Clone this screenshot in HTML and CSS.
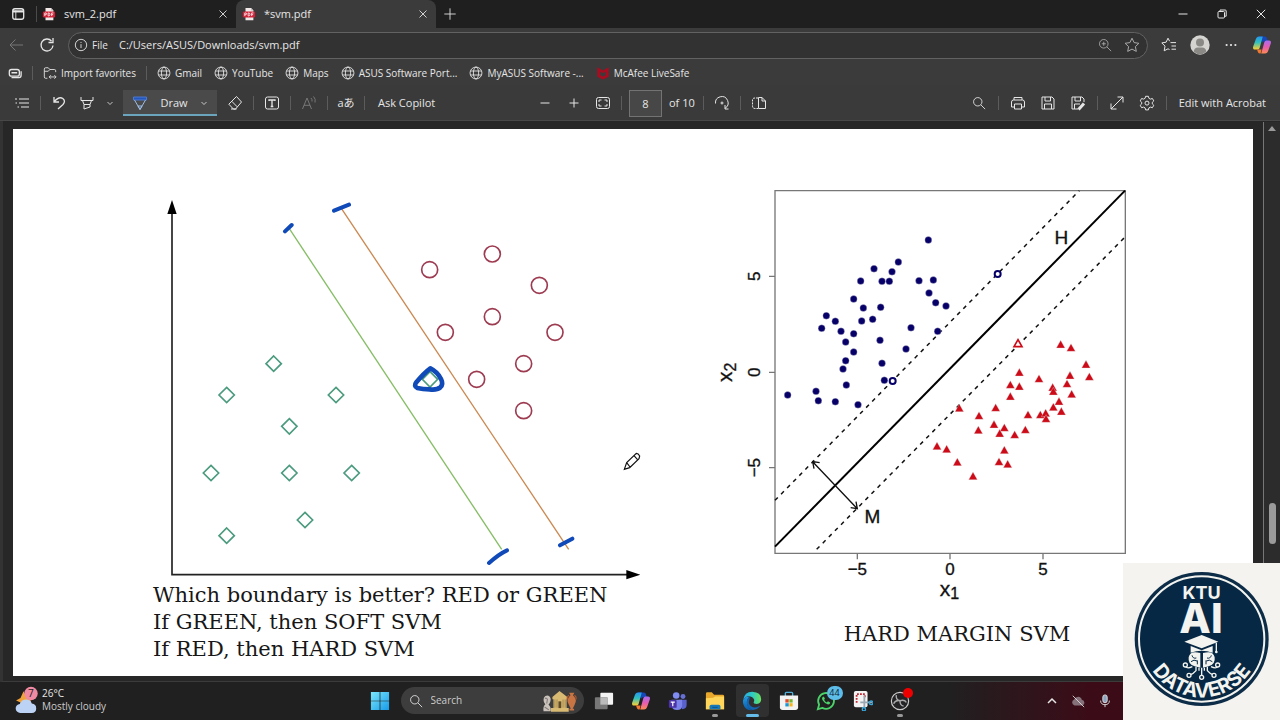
FILE: index.html
```html
<!DOCTYPE html>
<html lang="en">
<head>
<meta charset="utf-8">
<meta name="viewport" content="width=device-width, initial-scale=1">
<title>svm.pdf</title>
<link rel="stylesheet" href="styles.css">
</head>
<body>
<svg class="defs" aria-hidden="true">
  <defs>
    <symbol id="globe" viewBox="0 0 16 16"><circle cx="8" cy="8" r="6.8"/><ellipse cx="8" cy="8" rx="3" ry="6.8"/><path d="M1.6 5.7h12.8M1.6 10.3h12.8"/></symbol>
    <symbol id="close" viewBox="0 0 16 16"><path d="M4 4l8 8M12 4l-8 8"/></symbol>
    <symbol id="chev" viewBox="0 0 16 16"><path d="M3 6l5 5 5-5" stroke-width="1.600"/></symbol>
    <symbol id="lens" viewBox="0 0 16 16"><circle cx="6.6" cy="6.6" r="4.8"/><path d="M10.2 10.2L15 15"/></symbol>
    <symbol id="pdf" viewBox="0 0 16 16"><path d="M4 1.2h6.4L13 4v11H4z" fill="#f3e9e9" stroke="none"/><path d="M10.4 1.2V4H13z" fill="#bbb" stroke="none"/><rect x="1" y="5" width="14" height="7" rx="1.5" fill="#cf2338" stroke="none"/><path d="M3.2 10.4V6.8h1q1 0 1 1t-1 1h-1M7 6.8v3.4h.6q1.500 0 1.500-1.700T7.600 6.800zM11 10.400V6.800h2.200M11 8.700h1.700" stroke="#fff" stroke-width=".9"/></symbol>
    <linearGradient id="cpa" x1="0" y1="0" x2="0" y2="1"><stop offset="0" stop-color="#2696ee"/><stop offset=".45" stop-color="#31c1bd"/><stop offset="1" stop-color="#ffd02f"/></linearGradient>
    <linearGradient id="cpb" x1="0" y1="0" x2="0" y2="1"><stop offset="0" stop-color="#a66df0"/><stop offset=".5" stop-color="#e65cb0"/><stop offset="1" stop-color="#ff8a51"/></linearGradient>
    <symbol id="copilot" viewBox="0 0 20 20"><g stroke="none"><path d="M7 1.500h6q1.400 0 1.900 1.600l.9 3.200h-3.600q-1.600 0-2 1.500z" fill="#1746b8"/><path d="M7 1.500Q4.600 1.500 3.700 4.500L1.200 11.500Q.4 14.600 3 14.600h2.600q1.500 0 2-1.700L10.800 1.500z" fill="url(#cpa)"/><path d="M13 18.500q2.400 0 3.300-3l2.500-7q.8-3.100-1.800-3.100h-2.600q-1.500 0-2 1.700L9.200 18.500z" fill="url(#cpb)"/><path d="M5 14.600h4.600l-1 3.900H7.600q-1.300 0-1.800-1.700z" fill="#f4782f"/></g></symbol>
    <linearGradient id="win" x1="0" y1="0" x2="1" y2="1"><stop offset="0" stop-color="#7be7fb"/><stop offset="1" stop-color="#169bea"/></linearGradient>
    <linearGradient id="edgeA" x1="0" y1="0" x2="1" y2="0"><stop offset="0" stop-color="#28a8e8"/><stop offset=".5" stop-color="#2dc9c5"/><stop offset="1" stop-color="#6de25b"/></linearGradient>
    <linearGradient id="edgeB" x1="0" y1="0" x2="0" y2="1"><stop offset="0" stop-color="#209ce4"/><stop offset="1" stop-color="#0c59a4"/></linearGradient>
    <marker id="diamond" markerUnits="userSpaceOnUse" markerWidth="60" markerHeight="60" refX="30" refY="30" viewBox="0 0 60 60"><path d="M30 7l23 23-23 23L7 30z" fill="none" stroke="#4b9b7e" stroke-width="5"/></marker>
    <marker id="ring" markerUnits="userSpaceOnUse" markerWidth="60" markerHeight="60" refX="30" refY="30" viewBox="0 0 60 60"><circle cx="30" cy="30" r="24" fill="none" stroke="#9d3b51" stroke-width="5"/></marker>
    <marker id="dot" markerUnits="userSpaceOnUse" markerWidth="24" markerHeight="24" refX="12" refY="12" viewBox="0 0 24 24"><circle cx="12" cy="12" r="10.500" fill="#060068"/></marker>
    <marker id="tri" markerUnits="userSpaceOnUse" markerWidth="30" markerHeight="30" refX="15" refY="15" viewBox="0 0 30 30"><path d="M15 2l13 23H2z" fill="#cd0a17"/></marker>
  </defs>
</svg>

<header class="browser">
  <div class="tabs">
    <button class="tab-menu" aria-label="Tab actions"><svg class="i14" viewBox="0 0 16 16"><rect x="2" y="2" width="12.500" height="12" rx="2.500" stroke-width="1.500"/><path d="M2 5h12.500" stroke-width="2.500"/><path d="M5.500 4v10"/></svg></button>
    <div class="tab"><svg class="i14"><use href="#pdf"/></svg><span>svm_2.pdf</span><button aria-label="Close svm_2.pdf"><svg class="i14"><use href="#close"/></svg></button></div>
    <div class="tab active"><svg class="i14"><use href="#pdf"/></svg><span>*svm.pdf</span><button aria-label="Close svm.pdf"><svg class="i14"><use href="#close"/></svg></button></div>
    <button class="new-tab" aria-label="New tab"><svg class="i14" viewBox="0 0 16 16"><path d="M8 1.500v13M1.500 8h13"/></svg></button>
    <div class="window-controls">
      <button aria-label="Minimize"><svg class="i12" viewBox="0 0 12 12"><path d="M1.500 6h9"/></svg></button>
      <button aria-label="Restore"><svg class="i12" viewBox="0 0 12 12"><rect x="2" y="3.500" width="6.500" height="6.500" rx="1"/><path d="M4 3.300V2h5.200q1 0 1 1v5.200H9"/></svg></button>
      <button aria-label="Close window"><svg class="i12" viewBox="0 0 12 12"><path d="M1.800 1.800l8.400 8.400M10.200 1.800l-8.400 8.400"/></svg></button>
    </div>
  </div>

  <div class="address-row">
    <button class="dim" aria-label="Back"><svg class="i16" viewBox="0 0 16 16"><path d="M15 8H2M7.500 2.500L2 8l5.500 5.500"/></svg></button>
    <button aria-label="Refresh"><svg class="i16" viewBox="0 0 16 16"><path d="M14 8.500A6 6 0 1 1 12.500 4M14 1v4.500H9.500" stroke-width="1.300"/></svg></button>
    <form class="omnibox">
      <svg class="i14" viewBox="0 0 16 16"><circle cx="8" cy="8" r="6.500"/><path d="M8 7v4.500M8 4.500v1.200"/></svg>
      <label for="url">File</label>
      <input id="url" type="text" value="C:/Users/ASUS/Downloads/svm.pdf">
      <button type="button" class="soft" aria-label="Zoom"><svg class="i14" viewBox="0 0 16 16"><circle cx="6.600" cy="6.600" r="4.900"/><path d="M10.200 10.200L15 15M4.300 6.600h4.600M6.600 4.300v4.600"/></svg></button>
      <button type="button" class="soft" aria-label="Add to favorites"><svg class="i16" viewBox="0 0 16 16"><path d="M8 1.200l2.100 4.400 4.800.7-3.500 3.300.9 4.800L8 12.100l-4.300 2.300.9-4.800L1.100 6.300l4.800-.7z"/></svg></button>
    </form>
    <button aria-label="Favorites"><svg class="i16" viewBox="0 0 16 16"><path d="M9.500 5.600H15M10.500 9H15M10.500 12.200H15M8.600 4.200L7 1.200 5.100 5.200.8 5.900l3.200 3.200-.8 4.700L7 11.800l1.500.7"/></svg></button>
    <button aria-label="Profile"><svg class="i20" viewBox="0 0 20 20"><circle cx="10" cy="10" r="9.700" fill="#d5d4d1" stroke="none"/><circle cx="10" cy="7.600" r="4" fill="#8a8986" stroke="none"/><path d="M3.600 16.500q1-4 4-4h4.800q3 0 4 4-2.600 2.700-6.400 2.700t-6.400-2.700z" fill="#8a8986" stroke="none"/></svg></button>
    <button aria-label="Settings and more"><svg class="i14" viewBox="0 0 16 16"><path d="M3 8h.01M8 8h.01M13 8h.01" stroke-width="2.500" stroke-linecap="round"/></svg></button>
    <button aria-label="Copilot"><svg class="i20"><use href="#copilot"/></svg></button>
  </div>

  <nav class="favorites" aria-label="Favorites bar">
    <button aria-label="Saved groups"><svg class="i14" viewBox="0 0 16 16"><rect x="1.500" y="4" width="11.500" height="7.500" rx="2.500" stroke-width="1.500"/><path d="M4 7.700h6.500M4 13.300h8.500q2.500 0 2.500-3V6" stroke-width="1.500"/></svg></button>
    <i class="sep"></i>
    <a href="#"><svg class="i14" viewBox="0 0 16 16"><path d="M5 14H3q-1.500 0-1.500-1.500v-9Q1.500 2 3 2h3l1.800 2H13q1.500 0 1.500 1.500V7M1.500 6H6l1.800-2M7.500 12.500h7M9 10.500l-2 2 2 2M13 10.500l2 2-2 2"/></svg>Import favorites</a>
    <i class="sep"></i>
    <a href="#"><svg class="i14"><use href="#globe"/></svg>Gmail</a>
    <a href="#"><svg class="i14"><use href="#globe"/></svg>YouTube</a>
    <a href="#"><svg class="i14"><use href="#globe"/></svg>Maps</a>
    <a href="#"><svg class="i14"><use href="#globe"/></svg>ASUS Software Port...</a>
    <a href="#"><svg class="i14"><use href="#globe"/></svg>MyASUS Software -...</a>
    <a href="#"><svg class="i14 flat" viewBox="0 0 16 16"><path d="M1.500 1.500L8 5l6.500-3.500v10.700L8 15.500l-6.500-3.300zM5 6.500v4l3 1.500 3-1.500v-4L8 8z" fill="#a70d20" fill-rule="evenodd"/></svg>McAfee LiveSafe</a>
  </nav>
</header>

<div class="pdf-bar" role="toolbar" aria-label="PDF tools">
  <div class="group tools">
    <button aria-label="Contents"><svg class="i16" viewBox="0 0 16 16"><path d="M5 4h10M5 8h10M7 12h8M1 4h2M1.500 8h1.500M3.500 12H5"/></svg></button>
    <i class="sep"></i>
    <button aria-label="Undo"><svg class="i16" viewBox="0 0 16 16"><path d="M3 2v5h5M3.300 6.700Q8 1 11.800 3.500 15 6.200 12 9.500L7 14" stroke-width="1.300"/></svg></button>
    <button aria-label="Highlight"><svg class="i16" viewBox="0 0 16 16"><path d="M2 2v3.500h12V2M3.500 5.500L5 9.500h6l1.500-4M5 9.500V14l6-2V9.500"/></svg></button>
    <button class="mini" aria-label="Highlight options"><svg class="i8"><use href="#chev"/></svg></button>
    <button class="draw"><svg class="i16" viewBox="0 0 16 16"><path d="M1.500 2h13v3h-13z" fill="#2457bd" stroke="#4c78cf"/><path d="M2.500 5L8 14.500 13.500 5M6 11h4L8 14.500z" stroke="#9ebde5"/></svg>Draw<svg class="i8"><use href="#chev"/></svg></button>
    <button aria-label="Erase"><svg class="i16" viewBox="0 0 16 16"><path d="M9.500 1.500L1.800 9.200l4.700 4.900h2L14.500 7zM4.800 6.300l5.400 5.500M4 14h5.500"/></svg></button>
    <i class="sep"></i>
    <button aria-label="Add text"><svg class="i16" viewBox="0 0 16 16"><rect x="1.500" y="2" width="13" height="12" rx="2"/><path d="M5 6V5h6v1M8 5v6.500M6.700 11.500h2.600" stroke-width="1.300"/></svg></button>
    <i class="sep"></i>
    <button class="dim" aria-label="Read aloud"><svg class="i16" viewBox="0 0 16 16"><path d="M1.500 14L6 3l4.500 11M3 10.300h6M10 3q1.500 1.500 1 3.500M12.500 1.500q2.500 2.500 1.500 6"/></svg></button>
    <i class="sep"></i>
    <button class="translate" aria-label="Translate">aあ</button>
    <i class="sep"></i>
    <button class="text">Ask Copilot</button>
  </div>
  <div class="group pages">
    <button aria-label="Zoom out"><svg class="i12" viewBox="0 0 12 12"><path d="M1.500 6h9"/></svg></button>
    <button aria-label="Zoom in"><svg class="i12" viewBox="0 0 12 12"><path d="M1.500 6h9M6 1.500v9"/></svg></button>
    <button aria-label="Fit page"><svg class="i16" viewBox="0 0 16 16"><rect x="1.500" y="2.500" width="13" height="11" rx="2"/><path d="M4 7V5h2.500M12 7V5H9.500M4 9v2h2.500M12 9v2H9.500"/></svg></button>
    <i class="sep"></i>
    <input class="page-no" type="text" value="8" aria-label="Page number">
    <span class="page-total">of 10</span>
    <i class="sep"></i>
    <button aria-label="Rotate"><svg class="i16" viewBox="0 0 16 16"><path d="M1.500 8.500A6.300 6.300 0 1 1 11 13.300M11 10v4h3.500"/><circle cx="8" cy="8" r="1"/></svg></button>
    <i class="sep"></i>
    <button aria-label="Page view"><svg class="i16" viewBox="0 0 16 16"><path d="M7 3H4Q1.500 3 1.500 5v6q0 2.500 2.500 2.500h3" stroke-dasharray="2 1"/><path d="M7.500 2.500H11L14.500 6v7.500h-7zM11 2.500V6h3.500"/></svg></button>
  </div>
  <div class="group actions">
    <button aria-label="Find"><svg class="i14"><use href="#lens"/></svg></button>
    <i class="sep"></i>
    <button aria-label="Print"><svg class="i16" viewBox="0 0 16 16"><path d="M4 5V2.500h8V5M4 12H1.500V7q0-2 2-2h9q2 0 2 2v5H12M4.500 9h7v5h-7z"/></svg></button>
    <button aria-label="Save"><svg class="i16" viewBox="0 0 16 16"><path d="M2 2h10l2 2v10H2zM5 2v4h5.500V2M4.500 14V9h7v5"/></svg></button>
    <button aria-label="Save as"><svg class="i16" viewBox="0 0 16 16"><path d="M8 14H2V2h10l2 2v3M5 2v4h5.500V2M4.500 14V9H10"/><path d="M8.500 14.500L14 8.500" stroke-width="3"/></svg></button>
    <i class="sep"></i>
    <button aria-label="Full screen"><svg class="i16" viewBox="0 0 16 16"><path d="M2 14L14 2M8.500 2H14v5.500M2 8.500V14h5.500"/></svg></button>
    <button aria-label="Settings"><svg class="i16" viewBox="0 0 16 16"><path d="M6.600 1.300h2.800l.5 2 1.500.8 2-.6 1.400 2.400-1.500 1.400v1.600l1.500 1.400-1.400 2.400-2-.6-1.500.8-.5 2H6.600l-.5-2-1.500-.8-2 .6L1.200 10.300l1.500-1.400V7.300L1.200 5.900l1.400-2.400 2 .6 1.500-.8z"/><circle cx="8" cy="8.100" r="2"/></svg></button>
    <i class="sep"></i>
    <button class="text">Edit with Acrobat</button>
  </div>
</div>

<main class="viewer">
  <article class="slide">
    <section class="column">
      <svg class="boundary" viewBox="0 0 1560 1206" role="img" aria-label="Two classes with a green and a red boundary">
        <path d="M96 95V1184H1465" fill="none" stroke="#222" stroke-width="5"/>
        <path d="M96 60l14 42H82zM1501 1184l-42 14v-28z" fill="#000"/>
        <path d="M448 146L1085 1108" stroke="#86bd65" stroke-width="4"/>
        <path d="M604 85L1286 1108" stroke="#cb8850" stroke-width="4"/>
        <polyline class="points diamonds" points="401,551 260,645 588,645 448,739 213,879 448,879 635,879 495,1020 260,1067 870,598"/>
        <polyline class="points rings" points="869,269 1057,222 1198,316 1057,410 916,457 1245,457 1151,551 1010,598 1151,692"/>
        <g fill="none" stroke="#1049b8" stroke-width="12" stroke-linecap="round" stroke-linejoin="round">
          <path d="M582 92l45-18M435 154l20-19M1047 1149q30-27 54-38M1260 1096l37-20"/>
          <path d="M871 565Q852 579 829 607 820 618 832 624 848 628 869 628 890 631 901 622 911 613 903 597 893 576 871 565z" stroke-width="14"/>
        </g>
        <path d="M1453 868l7-20 29-28q6 0 10 8l-2 8-28 27zM1460 848l10 13M1482 827l10 11" fill="#fff" stroke="#111" stroke-width="3.500"/>
      </svg>
      <div class="caption">
        <p>Which boundary is better? RED or GREEN</p>
        <p>If GREEN, then SOFT SVM</p>
        <p>If RED, then HARD SVM</p>
      </div>
    </section>
    <section class="column">
      <svg class="margin-plot" viewBox="0 0 1290 1278" role="img" aria-label="Hard margin separating hyperplane">
        <path d="M195 32H1246V1120H195zM442 1120v18M720 1120v18M999 1120v18M195 289h-18M195 577h-18M195 863h-18" fill="none" stroke="#777" stroke-width="4"/>
        <path d="M195 1100L1245 32" stroke="#000" stroke-width="6"/>
        <path d="M195 961L1108 32M320 1108L1246 170" stroke="#111" stroke-width="4.500" stroke-dasharray="12 14"/>
        <path d="M308 845L442 986M329 848l-21-3 4 21M422 983l20 3-4-21" fill="none" stroke="#111" stroke-width="4"/>
        <polyline class="points dots" points="655,180 565,246 546,275 492,266 452,303 516,304 538,304 627,302 670,300 657,339 677,368 708,378 431,357 460,384 512,382 349,407 376,424 335,445 393,454 455,423 488,418 431,461 407,486 510,481 603,443 683,454 588,507 431,516 407,542 399,567 516,550 523,601 409,615 233,645 318,634 325,662 376,665 444,674"/>
        <polyline class="points tris" points="1052,494 1083,504 1128,554 1138,591 1080,587 1071,612 1085,643 987,597 928,578 901,615 928,620 901,650 1028,623 1030,635 1047,665 1030,682 1054,695 748,685 857,684 807,708 954,705 991,705 1007,700 1008,717 852,734 883,744 805,751 869,761 914,765 946,750 681,799 710,808 883,811 742,847 867,846 893,853 789,889"/>
        <g fill="#fff" stroke="#060068" stroke-width="6"><circle cx="548" cy="603" r="9"/><circle cx="863" cy="282" r="9"/></g>
        <path d="M924 479l12 21h-24z" fill="#fff" stroke="#cd0a17" stroke-width="5"/>
        <g class="axis-text">
          <text x="442" y="1184">−5</text><text x="720" y="1184">0</text><text x="999" y="1184">5</text>
          <text transform="translate(151 289) rotate(-90)">5</text><text transform="translate(151 577) rotate(-90)">0</text><text transform="translate(151 863) rotate(-90)">−5</text>
        </g>
        <g class="line-text"><text x="1054" y="193">H</text><text x="487" y="1029">M</text></g>
        <text class="var" x="718" y="1247">x<tspan class="sub" dy="10">1</tspan></text>
        <text class="var" transform="translate(66 577) rotate(-90)">x<tspan class="sub" dy="12">2</tspan></text>
      </svg>
      <p class="caption heading">HARD MARGIN SVM</p>
    </section>
  </article>
  <div class="scroll" aria-hidden="true"><span class="up"></span><span class="thumb"></span></div>
</main>

<footer class="taskbar">
  <div class="weather">
    <svg class="w-icon" viewBox="0 0 60 75"><path d="M22 14l4 8 10-6 8 36H12l2-8-12-5 12-7z" fill="#f2a23b"/><path d="M14 72a12 12 0 0 1-2-24q5-12 17-12 12 0 15 11 12 1 12 13 0 12-12 12z" fill="#bcd3f5"/><circle cx="42" cy="20" r="18" fill="#f08aa2"/><text x="42" y="29">7</text></svg>
    <div><strong>26°C</strong><span>Mostly cloudy</span></div>
  </div>
  <div class="apps">
    <button aria-label="Start"><svg class="i20 flat" viewBox="0 0 22 22"><path d="M1 1h9.600v9.600H1zM11.400 1H21v9.600h-9.600zM1 11.400h9.600V21H1zM11.400 11.400H21V21h-9.600z" fill="url(#win)"/></svg></button>
    <label class="search"><svg class="i14"><use href="#lens"/></svg><input type="text" placeholder="Search" aria-label="Search">
      <svg class="temple flat" viewBox="0 0 100 62"><path d="M5 60q-2-14 5-20-7-7-4-18 4-8 13-6 9 5 5 17-2 6-5 8 8 8 6 19z" fill="#c9c2bb"/><path d="M9 24q4-3 7 2l-2 12M8 48l12 8" fill="none" stroke="#807b7a" stroke-width="3"/><path d="M30 20L50 3l22 17v6H30zM33 26h37v25H33zM26 51h50v10H26z" fill="#d8ba72"/><path d="M37 27v23M43 27v23M60 27v23M66 27v23" stroke="#a98d51" stroke-width="3"/><path d="M47 32h8v19h-8z" fill="#5d4b2a"/><path d="M77 8h15l-4 7q14 12 4 28l-5 10h4v5H78v-5h4l-5-10q-11-16 4-28z" fill="#c87443"/><path d="M77 15q-7 4-5 12M92 15q7 4 4 12" fill="none" stroke="#b2562e" stroke-width="3"/></svg></label>
    <button aria-label="Task view"><svg class="i20 flat" viewBox="0 0 22 22"><rect x="7" y="2" width="14" height="13" rx="1" fill="#f3f3f3"/><rect x="1" y="7" width="14" height="13" rx="1" fill="#777"/><path d="M7 7h8v8H7z" fill="#bbb"/></svg></button>
    <button aria-label="Copilot"><svg class="i20"><use href="#copilot"/></svg></button>
    <button aria-label="Teams"><svg class="i20 flat" viewBox="0 0 22 22"><circle cx="9" cy="5" r="3.600" fill="#818cf2"/><circle cx="16.500" cy="6" r="2.700" fill="#6770d6"/><path d="M12 9.500h8.500v6q0 4.500-5 4.500z" fill="#5962cc"/><path d="M4 9.500h11.500v6.500q0 5-5.500 5t-6-5z" fill="#7b83eb"/><rect x="1" y="10" width="8.500" height="8.500" rx="1" fill="#4b32a8"/><path d="M3 12.300h4.500M5.250 12.300v4.500" stroke="#fff" stroke-width="1.300"/></svg></button>
    <button class="open" aria-label="File Explorer"><svg class="i20 flat" viewBox="0 0 22 22"><path d="M1 3q0-1.500 1.500-1.500h5L10 4h9.500Q21 4 21 5.500V20H1z" fill="#e9a82b"/><path d="M1 8l8-.5L11 6h10v14H1z" fill="#ffd65a"/><path d="M5 20v-3q0-2 2-2h8q2 0 2 2v3z" fill="#1879b9"/><path d="M8 18h6" stroke="#07528c"/></svg></button>
    <button class="open current" aria-label="Edge"><svg class="i20 flat" viewBox="0 0 24 24"><path d="M1.200 11Q3 1 12.300 1 23 1.500 23 10q0 5-5.300 5.500-4 0-3.700-2 1.200-1.200.4-3.500Q12.500 6.300 8 6.200 3.500 6.500 1.200 11z" fill="url(#edgeA)"/><path d="M1.200 11Q4 6 8.600 7q-3 2.500-2.700 7 .6 6.500 7 8.900Q4 24 1.500 15.500q-.6-2.500-.3-4.500z" fill="url(#edgeB)"/><path d="M8.600 11q-1.300 4.500 2.200 7.200 4.500 3 9.600 0 1.400-.4.500 1-3.300 3.700-8 3.700-5.500-1.700-7-7.200Q5 9 10 7.200q-1 1.500-1.400 3.800z" fill="#1266b4"/></svg></button>
    <button aria-label="Microsoft Store"><svg class="i20 flat" viewBox="0 0 22 22"><path d="M7 6V2.500Q7 1.500 8 1.500h6q1 0 1 1V6" stroke="#4faed9" stroke-width="1.500"/><path d="M1 5h20v13q0 3-3 3H4q-3 0-3-3z" fill="#f3f3f3"/><path d="M7 9h3.700v3.700H7z" fill="#e24a2b"/><path d="M11.400 9H15v3.700h-3.600z" fill="#72b72c"/><path d="M7 13.400h3.700V17H7z" fill="#1a94da"/><path d="M11.400 13.400H15V17h-3.600z" fill="#f6b51c"/></svg></button>
    <button aria-label="WhatsApp"><svg class="i20" viewBox="0 0 22 22"><path d="M2 20l1.400-5A8.700 8.700 0 1 1 7 18.600z" stroke="#4bd36a" stroke-width="2"/><path d="M7.700 6.300q-2 1.500-.2 4.200 2.300 3.800 5.800 4.400 2.200-.1 2.300-2.300l-2.500-1.200-1.200 1.300q-2-.8-3-3l.9-1.100-1.100-2.300z" fill="#4bd36a" stroke="none"/></svg><span class="badge">44</span></button>
    <button aria-label="Snipping Tool"><svg class="i20" viewBox="0 0 22 22"><rect x="1" y="0" width="15" height="18" rx="2" fill="#f3f3f3" stroke="none"/><path d="M4 13V3.500h9V8" stroke="#c22932" stroke-width="2" stroke-dasharray="2 1.300"/><path d="M12.500 5v14M8 12.500h13" stroke="#9aa8b3" stroke-width="2"/><circle cx="20" cy="13" r="2" stroke="#38a7dc" stroke-width="1.500"/><circle cx="12" cy="20" r="1.800" stroke="#38a7dc" stroke-width="1.500"/></svg></button>
    <button class="open" aria-label="OBS Studio"><svg class="i20" viewBox="0 0 22 22"><circle cx="11" cy="11" r="9.500" fill="#242427" stroke="#ccc" stroke-width="1.300"/><path d="M7 4.500q-1 5 4 6.200 5-1.500 7 1.800M11 10.700q-.2 5 4 6M11 10.700Q6 9.500 4 14" stroke="#aaa" stroke-width="1.500"/></svg><span class="recording"></span></button>
  </div>
  <div class="tray">
    <button aria-label="Show hidden icons"><svg class="i12" viewBox="0 0 12 12"><path d="M2 8l4-4 4 4" stroke-width="1.500"/></svg></button>
    <button aria-label="Cloud sync"><svg class="i14" viewBox="0 0 16 16"><path d="M4 13a3.500 3.500 0 0 1-.4-6.700Q5 3 8.300 3q3.400.3 4 3.500 3 .6 3 3.500-.3 3-3.300 3z" fill="#85717a" stroke="none"/><path d="M2 2l13 13" stroke="#ddd"/></svg></button>
    <button aria-label="Microphone"><svg class="i14" viewBox="0 0 16 16"><rect x="5.500" y="1" width="5" height="9" rx="2.500" fill="#8ba4c0"/><path d="M3 7.500q0 4.700 5 4.700t5-4.700M8 12.200V15"/></svg></button>
  </div>
</footer>

<aside class="brand">
  <svg viewBox="39 189 471 471" role="img" aria-label="KTU AI Dataverse">
    <circle cx="275" cy="417" r="201" fill="#0c2c47"/>
    <circle cx="275" cy="417" r="188" fill="#062844" stroke="#f3f3ef" stroke-width="6"/>
    <text class="ktu" x="275" y="296">KTU</text>
    <text class="ai" x="273" y="398">AI</text>
    <path id="arc" d="M98 415A177 177 0 0 0 452 415" fill="none"/>
    <text class="ring-text"><textPath href="#arc" startOffset="50%">DATAVERSE</textPath></text>
    <path d="M223 425l52-20 50 20-50 20zM242 438l33 13 33-13v20q-33-11-66 0z" fill="#f3f3ef"/>
    <path d="M319 428v29" stroke="#f3f3ef" stroke-width="4"/><circle cx="319" cy="456" r="4" fill="#f3f3ef"/>
    <path d="M271 459q-31-9-35 13-3 21 18 27l17 4zM279 459q31-9 35 13 3 21-18 27l-17 4z" fill="#f3f3ef"/>
    <path d="M246 466q3 11 13 8M243 485q9-8 18-2M262 493v-12M304 466q-3 11-13 8M307 485q-9-8-18-2M288 493v-12" fill="none" stroke="#062844" stroke-width="3"/>
    <g fill="#062844" stroke="#f3f3ef" stroke-width="4"><path d="M258 500v12q-7 9-19 13M247 500q-15 7-20 0M292 500v12q7 9 19 13M303 500q15 7 20 0M275 503v24M267 503v9M283 503v9" fill="none"/><circle cx="226" cy="495" r="6"/><circle cx="323" cy="495" r="6"/><circle cx="237" cy="526" r="6"/><circle cx="312" cy="526" r="6"/><circle cx="275" cy="532" r="6"/></g>
  </svg>
</aside>
</body>
</html>
```
FILE: styles.css
```css
* { box-sizing: border-box; }

body {
  margin: 0;
  min-height: 100vh;
  display: flex;
  flex-direction: column;
  background: #272727;
  color: #e6e6e6;
  font: 11px/16px "Open Sans", "Noto Sans", sans-serif;
  overflow-x: hidden;
}

button, input {
  font: inherit;
  color: inherit;
  background: none;
  border: 0;
  padding: 0;
  margin: 0;
}

button {
  display: inline-flex;
  align-items: center;
  justify-content: center;
  flex-shrink: 0;
}

input { min-width: 0; outline: 0; }
a { color: inherit; text-decoration: none; }
p { margin: 0; }
svg { display: block; flex-shrink: 0; fill: none; stroke: currentColor; }
.flat { stroke: none; }
.defs { position: absolute; width: 0; height: 0; }
svg text { stroke: none; }

.i8 { width: 8px; height: 8px; }
.i12 { width: 12px; height: 12px; }
.i14 { width: 14px; height: 14px; }
.i16 { width: 16px; height: 16px; }
.i20 { width: 20px; height: 20px; }
.dim { color: #777; }
.soft { color: #aaa; }
.sep { width: 1px; height: 14px; background: #5c5c5c; flex-shrink: 0; }

/* Browser chrome */
.browser { background: #3b3b3b; }

.tabs { display: flex; height: 28px; padding-bottom: 1px; background: #1f1f1f; }
.tab-menu { width: 36px; }
.tab {
  display: flex;
  align-items: center;
  gap: 8px;
  width: 200px;
  padding: 0 6px;
}
.tab:not(.active) { background: linear-gradient(#4b4b4b, #4b4b4b) no-repeat 0 50% / 1px 16px; }
.tab span { flex: 1; }
.tab.active { height: 28px; background: #3b3b3b; border-radius: 8px 8px 0 0; }
.new-tab { width: 28px; }
.window-controls { display: flex; margin-left: auto; }
.window-controls button { width: 39px; }

.address-row {
  display: flex;
  align-items: center;
  gap: 11px;
  height: 34px;
  padding: 0 8px 0 6px;
}
.address-row > button { width: 20px; height: 20px; }
.omnibox {
  flex: 1;
  display: flex;
  align-items: center;
  gap: 4px;
  height: 27px;
  padding: 0 7px 0 5px;
  background: #323232;
  border: 1px solid #626262;
  border-radius: 14px;
}
.omnibox label { width: 23px; font-size: 10px; }
.omnibox input { flex: 1; }
.omnibox .soft { margin-left: 8px; }

.favorites {
  display: flex;
  align-items: center;
  gap: 12px;
  height: 23px;
  padding: 0 0 1px 8px;
  font-size: 10px;
}
.favorites a { display: flex; align-items: center; gap: 4px; white-space: nowrap; }
.favorites .sep { margin: 0 -2px; }

/* PDF toolbar */
.pdf-bar {
  display: flex;
  align-items: center;
  height: 36px;
  padding: 1px 14px 0 12px;
  background: #3a3a3a;
  border-bottom: 1px solid #484848;
  white-space: nowrap;
}
.group { display: flex; align-items: center; gap: 8px; }
.group button { min-width: 20px; height: 26px; }
.group .mini { min-width: 10px; }
.group .draw {
  width: 94px;
  gap: 12px;
  padding-top: 2px;
  background: #4a4a4a;
  border-bottom: 2px solid #6ba5bd;
}
.translate { font-family: "Open Sans", "Noto Sans CJK JP", sans-serif; }
.tools .text { width: 69px; padding-left: 5px; justify-content: flex-start; }
.pages { gap: 7px; margin-left: 92px; }
.pages button { min-width: 22px; }
.page-no {
  width: 33px;
  height: 27px;
  text-align: center;
  background: #474747;
  border: 1px solid #737373;
}
.page-total { width: 27px; }
.actions { margin-left: auto; }
.actions button { min-width: 22px; }
.actions .text { padding-left: 4px; }

/* Document */
.viewer {
  flex: 1;
  display: flex;
  padding: 8px 0 5px 10px;
  border-left: 3px solid #333;
  background: #272727;
  border-bottom: 1px solid #3b3b3b;
}
.slide {
  flex: 1;
  display: flex;
  justify-content: center;
  gap: 50px;
  padding: 51px 0 13px 14px;
  background: #fff;
  color: #171717;
}
.boundary { width: 520px; stroke: none; }
.margin-plot { width: 430px; stroke: none; }
.caption { padding-left: 13px; font: 21px/27px "DejaVu Serif", serif; white-space: nowrap; }
.heading { margin-top: 15px; padding-left: 64px; text-align: center; }
.points { fill: none; stroke: none; }
.diamonds { marker: url(#diamond); }
.rings { marker: url(#ring); }
.dots { marker: url(#dot); }
.tris { marker: url(#tri); }
.margin-plot text {
  fill: #111;
  stroke: #111;
  stroke-width: 1;
  text-anchor: middle;
  font-family: "Liberation Sans", sans-serif;
}
.axis-text { font-size: 51px; }
.line-text { font-size: 57px; }
.margin-plot .var { font-size: 63px; }
.sub { font-size: 48px; }

.scroll {
  display: flex;
  flex-direction: column;
  align-items: center;
  width: 17px;
  margin: -7px 0 -5px 10px;
  border-left: 1px solid #777;
  background: #2c2c2c;
}
.up { margin-top: 4px; border: 4px solid transparent; border-top: 0; border-bottom: 5px solid #999; }
.thumb { width: 7px; height: 41px; margin-top: 372px; border-radius: 4px; background: #9b9b9b; }

/* Taskbar */
.taskbar {
  display: grid;
  grid-template-columns: 1fr auto 1fr;
  align-items: center;
  height: 39px;
  padding-bottom: 2px;
  background: linear-gradient(90deg, #202020 74%, #3b0c18 85%, #3b0c18);
  font-size: 10px;
  line-height: 13px;
}
.weather { display: flex; align-items: center; gap: 4px; padding: 0 0 1px 15px; }
.weather strong, .weather span { display: block; font-weight: 400; }
.weather span { color: #ccc; }
.w-icon { width: 23px; height: 28px; stroke: none; }
.w-icon text { font: 27px "Open Sans", sans-serif; fill: #222; text-anchor: middle; }
.apps { display: flex; align-items: center; gap: 4px; }
.apps button { position: relative; width: 33px; height: 33px; border-radius: 4px; }
.apps .current { background: #303030; }
.open::after {
  content: "";
  position: absolute;
  bottom: 0;
  width: 6px;
  height: 3px;
  border-radius: 2px;
  background: #999;
}
.current::after { width: 13px; background: #65bceb; }
.search {
  display: flex;
  align-items: center;
  gap: 8px;
  width: 183px;
  height: 27px;
  padding: 0 6px 0 8px;
  border-radius: 14px;
  background: #3d3d3d;
}
.search input { flex: 1; }
.search input::placeholder { color: #ccc; opacity: 1; }
.temple { width: 37px; height: 22px; }
.badge {
  position: absolute;
  top: 2px;
  right: 0;
  width: 16px;
  height: 14px;
  border-radius: 7px;
  background: #5dbde9;
  color: #123;
  font-size: 9px;
  line-height: 14px;
}
.recording { position: absolute; top: 4px; right: 4px; width: 10px; height: 10px; border-radius: 50%; background: #ee0000; }
.tray { display: flex; justify-content: flex-end; gap: 13px; padding-right: 168px; }

/* Channel logo laid over the corner of the screen */
.brand { position: fixed; right: 0; bottom: 0; width: 157px; background: #f4f3ef; }
.brand svg { stroke: none; }
.brand text { fill: #f3f3ef; text-anchor: middle; font-family: Inter, sans-serif; font-weight: 700; }
.brand .ktu { font-size: 54px; }
.brand .ai { font-size: 123px; font-weight: 800; }
.brand .ring-text { font-size: 60px; }
```
